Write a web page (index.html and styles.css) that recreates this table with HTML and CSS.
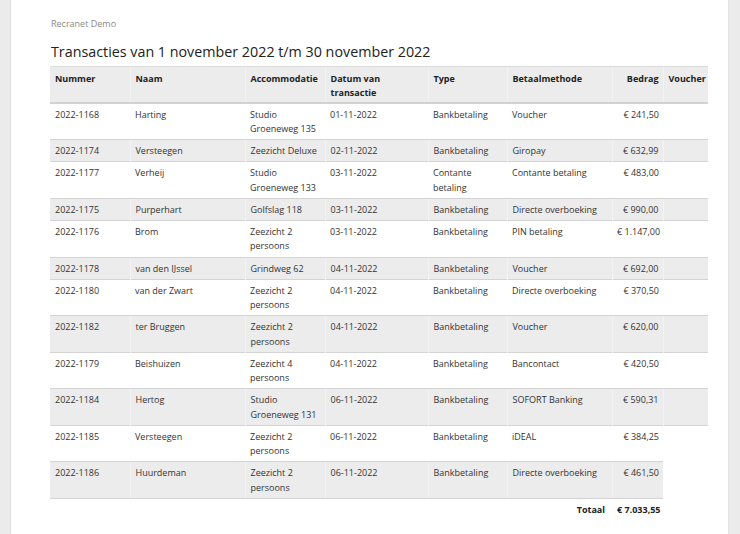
FILE: index.html
```html
<!DOCTYPE html>
<html lang="nl">
<head>
<meta charset="utf-8">
<title>Transacties</title>
<link rel="stylesheet" href="styles.css">
</head>
<body>
<div class="page">
  <div class="company">Recranet Demo</div>
  <h1 class="title">Transacties van 1 november 2022 t/m 30 november 2022</h1>
  <table class="tx">
    <colgroup>
      <col class="c-num"><col class="c-naam"><col class="c-acc"><col class="c-datum"><col class="c-type"><col class="c-bm"><col class="c-bedrag"><col class="c-voucher">
    </colgroup>
    <thead>
      <tr><th>Nummer</th><th>Naam</th><th>Accommodatie</th><th>Datum van transactie</th><th>Type</th><th>Betaalmethode</th><th class="num">Bedrag</th><th>Voucher</th></tr>
    </thead>
    <tbody>
      <tr><td>2022-1168</td><td>Harting</td><td>Studio Groeneweg 135</td><td>01-11-2022</td><td>Bankbetaling</td><td>Voucher</td><td class="num">€ 241,50</td><td></td></tr>
      <tr><td>2022-1174</td><td>Versteegen</td><td>Zeezicht Deluxe</td><td>02-11-2022</td><td>Bankbetaling</td><td>Giropay</td><td class="num">€ 632,99</td><td></td></tr>
      <tr><td>2022-1177</td><td>Verheij</td><td>Studio Groeneweg 133</td><td>03-11-2022</td><td>Contante betaling</td><td>Contante betaling</td><td class="num">€ 483,00</td><td></td></tr>
      <tr><td>2022-1175</td><td>Purperhart</td><td>Golfslag 118</td><td>03-11-2022</td><td>Bankbetaling</td><td>Directe overboeking</td><td class="num">€ 990,00</td><td></td></tr>
      <tr><td>2022-1176</td><td>Brom</td><td>Zeezicht 2 persoons</td><td>03-11-2022</td><td>Bankbetaling</td><td>PIN betaling</td><td class="num">€ 1.147,00</td><td></td></tr>
      <tr><td>2022-1178</td><td>van den IJssel</td><td>Grindweg 62</td><td>04-11-2022</td><td>Bankbetaling</td><td>Voucher</td><td class="num">€ 692,00</td><td></td></tr>
      <tr><td>2022-1180</td><td>van der Zwart</td><td>Zeezicht 2 persoons</td><td>04-11-2022</td><td>Bankbetaling</td><td>Directe overboeking</td><td class="num">€ 370,50</td><td></td></tr>
      <tr><td>2022-1182</td><td>ter Bruggen</td><td>Zeezicht 2 persoons</td><td>04-11-2022</td><td>Bankbetaling</td><td>Voucher</td><td class="num">€ 620,00</td><td></td></tr>
      <tr><td>2022-1179</td><td>Beishuizen</td><td>Zeezicht 4 persoons</td><td>04-11-2022</td><td>Bankbetaling</td><td>Bancontact</td><td class="num">€ 420,50</td><td></td></tr>
      <tr><td>2022-1184</td><td>Hertog</td><td>Studio Groeneweg 131</td><td>06-11-2022</td><td>Bankbetaling</td><td>SOFORT Banking</td><td class="num">€ 590,31</td><td></td></tr>
      <tr><td>2022-1185</td><td>Versteegen</td><td>Zeezicht 2 persoons</td><td>06-11-2022</td><td>Bankbetaling</td><td>iDEAL</td><td class="num">€ 384,25</td><td></td></tr>
      <tr><td>2022-1186</td><td>Huurdeman</td><td>Zeezicht 2 persoons</td><td>06-11-2022</td><td>Bankbetaling</td><td>Directe overboeking</td><td class="num">€ 461,50</td></tr>
    </tbody>
    <tfoot>
      <tr><td colspan="6" class="num total-label">Totaal</td><td class="num total-value">€ 7.033,55</td><td class="empty"></td></tr>
    </tfoot>
  </table>
</div>
</body>
</html>
```

FILE: styles.css
```css
html, body {
  margin: 0;
  padding: 0;
}
body {
  background: #ebebeb;
  font-family: "Open Sans", "Noto Sans", "Liberation Sans", sans-serif;
  color: #333;
  height: 534px;
  overflow: hidden;
}
.page {
  margin: 0 12px 0 11px;
  min-height: 534px;
  background: #fff;
  box-shadow: -1px 0 0 #dedede, 1px 0 0 #e3e3e3;
  padding: 17px 20px 0 39px;
  box-sizing: border-box;
}
.company {
  font-size: 9px;
  line-height: 14px;
  color: #8a8a8a;
  padding-left: 1px;
}
.title {
  margin: 10px 0 3px 0;
  font-size: 14.3px;
  font-weight: 400;
  color: #222;
  line-height: 22px;
  padding-left: 1px;
}
.tx {
  border-collapse: collapse;
  table-layout: fixed;
  width: 658px;
  font-size: 9px;
  line-height: 14.25px;
}
.c-num { width: 80px; }
.c-naam { width: 115px; }
.c-acc { width: 80px; }
.c-datum { width: 103px; }
.c-type { width: 79px; }
.c-bm { width: 105px; }
.c-bedrag { width: 51px; }
.c-voucher { width: 45px; }
.tx th {
  background: #ececec;
  text-align: left;
  vertical-align: top;
  font-weight: 700;
  color: #222;
  padding: 5px 5px 1px 5px;
  border-top: 1px solid #dcdcdc;
  border-bottom: 2px solid #d2d2d2;
  height: 28.5px;
  box-sizing: content-box;
}
.tx td {
  vertical-align: top;
  padding: 4px 5px 3px 5px;
  border-top: 1px solid #d4d4d4;
}
.tx tbody tr:nth-child(even) td {
  background: #ececec;
}
.tx tbody tr:last-child td {
  border-bottom: 1px solid #d4d4d4;
}
.tx th + th,
.tx tbody tr:nth-child(even) td + td {
  border-left: 1px solid #f3f3f3;
}
.tx .num {
  text-align: right;
  padding-right: 4px;
  white-space: nowrap;
}
.tx tfoot td {
  border-top: 0;
  padding-top: 4px;
  font-weight: 700;
  color: #222;
}
.tx tfoot .total-label {
  padding-right: 7px;
}
.tx tfoot .total-value {
  padding-right: 5px;
}
```
